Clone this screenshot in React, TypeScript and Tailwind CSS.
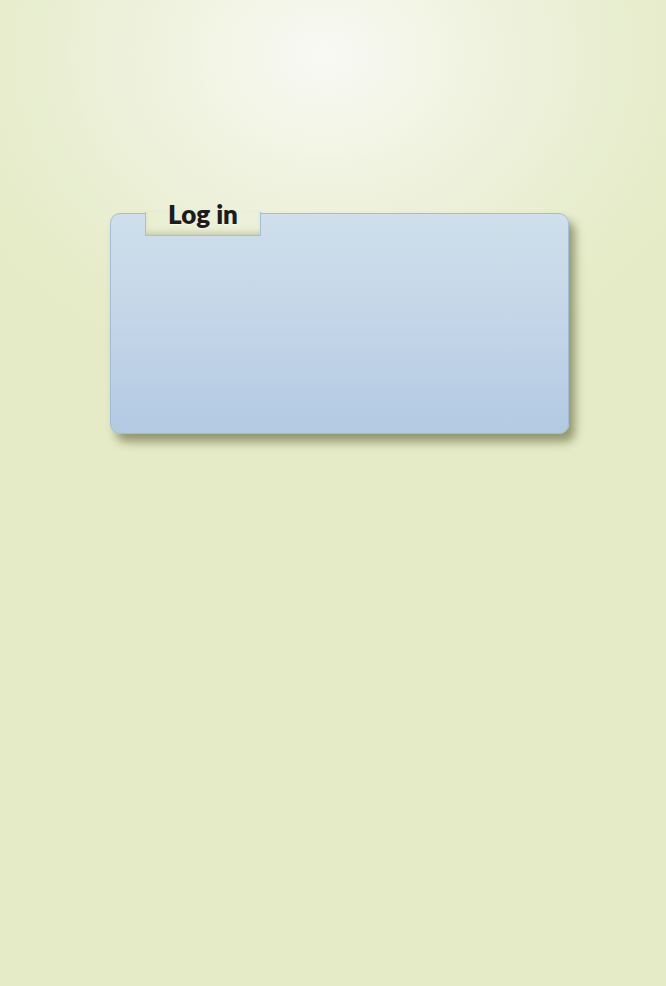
export default function App() {
  const bg =
    "bg-[radial-gradient(ellipse_400px_330px_at_325px_55px,#f8f9f4_0%,#f2f4e4_30%,#eaefd4_65%,#e5ebc6_100%)] bg-[#e5ebc6] bg-fixed";
  return (
    <div className={`min-h-[986px] w-full ${bg} pt-[213px] pl-[110px]`}>
      <div className="relative w-[459px] h-[221px]">
        <div className="w-full h-full rounded-[10px] border border-[#a3bdd8] bg-[linear-gradient(180deg,#cfdfeb_0%,#c3d5e8_50%,#b3cae3_100%)] shadow-[6px_8px_10px_rgba(80,84,40,0.55)]" />
        <div
          className={`absolute left-[35px] top-[-1px] w-[116px] h-[24px] ${bg} border-x border-b border-[#a7bfd6] shadow-[inset_0_-5px_6px_-3px_rgba(120,125,80,0.35)] flex items-start justify-center`}
        >
          <span className="mt-[-13px] text-[26px] leading-[30px] font-extrabold text-[#1c1c1c] [font-family:Lato,'Open_Sans',sans-serif] [text-shadow:0_1px_1px_rgba(255,255,255,0.6)]">
            Log in
          </span>
        </div>
      </div>
    </div>
  );
}
